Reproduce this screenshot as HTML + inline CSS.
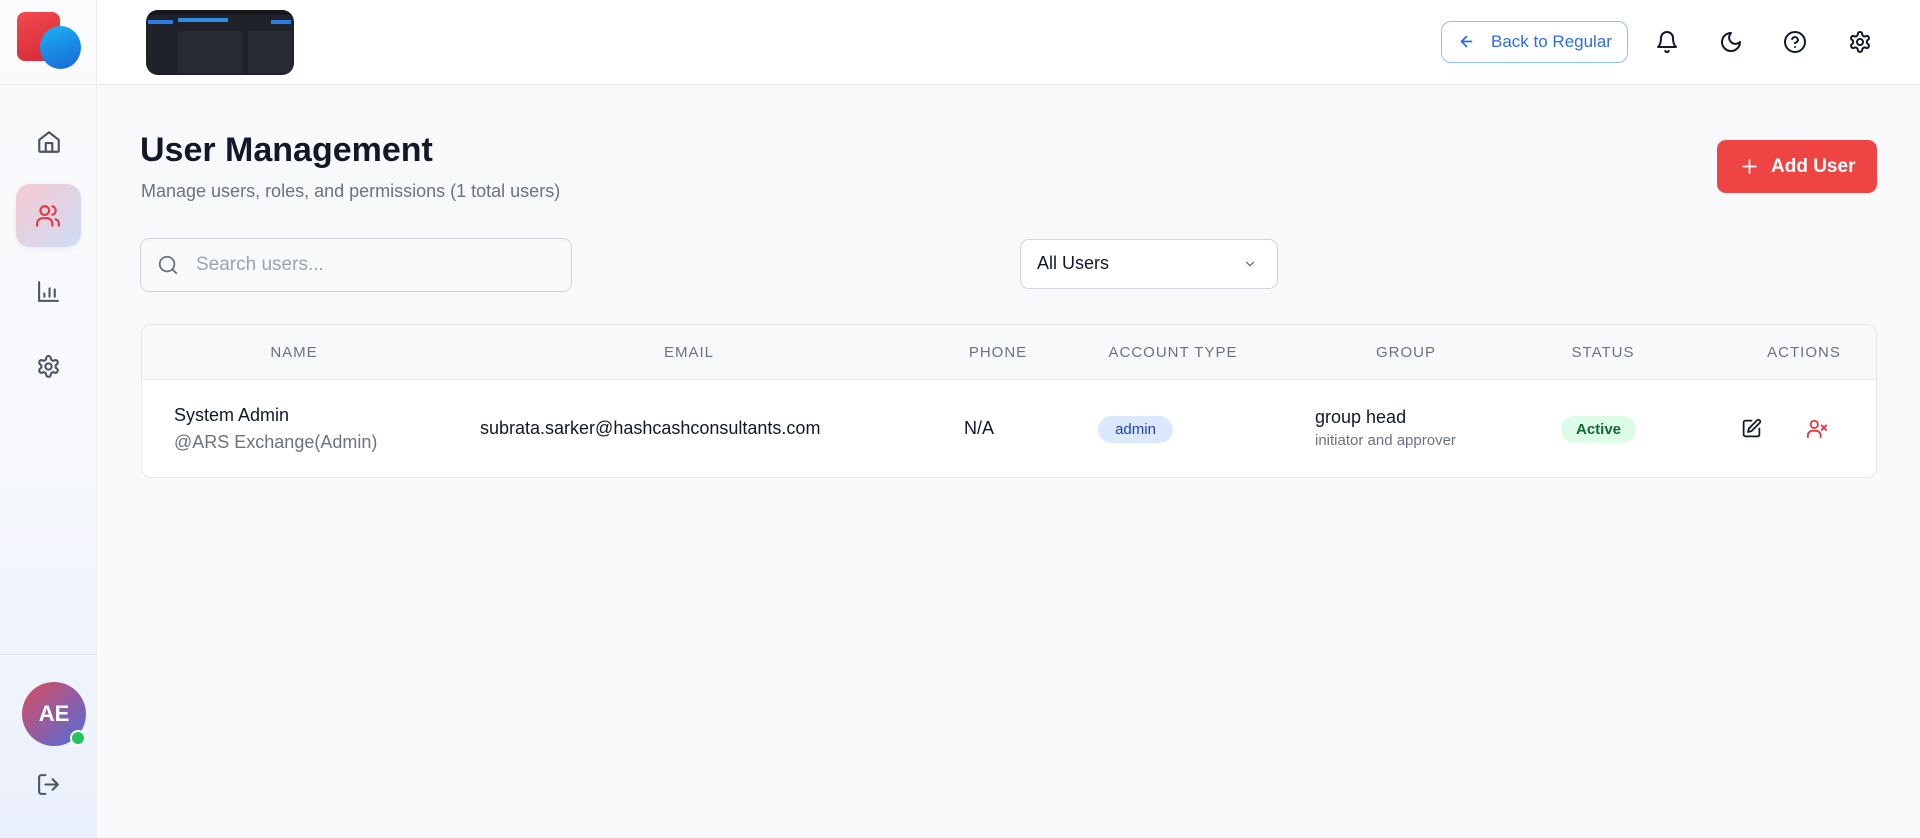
<!DOCTYPE html>
<html><head><meta charset="utf-8"><style>
*{box-sizing:border-box;margin:0;padding:0}
body{width:1920px;height:838px;overflow:hidden;font-family:"Liberation Sans",sans-serif;background:#f8f9fb;position:relative;color:#111827}
.abs{position:absolute}
.side{left:0;top:0;width:97px;height:838px;background:linear-gradient(180deg,#fbfbfd 0%,#f6f8fc 55%,#eaf0fc 100%);border-right:1px solid #eceef2}
.head{left:97px;top:0;right:0;height:85px;background:#fff;border-bottom:1px solid #e5e7eb}
svg{display:block}
.th{position:absolute;top:344px;font-size:15px;letter-spacing:1px;color:#6b7280;transform:translateX(-50%)}
</style></head><body>
<div class="abs side">
  <div class="abs" style="left:0;top:0;width:97px;height:85px;border-bottom:1px solid #eceef2"></div>
  <div class="abs" style="left:17px;top:12px;width:43px;height:49px;border-radius:8px;background:linear-gradient(160deg,#f2494f,#d42a36)"></div>
  <div class="abs" style="left:40px;top:26px;width:41px;height:43px;border-radius:50%;background:linear-gradient(160deg,#1eb0f3,#1668d4)"></div>
  <svg class="abs" style="left:36px;top:129px" width="26" height="26" viewBox="0 0 24 24" fill="none" stroke="#4b5563" stroke-width="2" stroke-linecap="round" stroke-linejoin="round"><path d="M3 10l9-7 9 7v10a1 1 0 0 1-1 1H4a1 1 0 0 1-1-1z"/><path d="M9 21v-8h6v8"/></svg>
  <div class="abs" style="left:16px;top:184px;width:65px;height:63px;border-radius:14px;background:linear-gradient(135deg,#f6c9cf,#cddcf8);box-shadow:0 2px 6px rgba(0,0,0,.06)"></div>
  <svg class="abs" style="left:35px;top:203px" width="26" height="26" viewBox="0 0 24 24" fill="none" stroke="#e53941" stroke-width="2" stroke-linecap="round"><circle cx="9" cy="7" r="4"/><path d="M2 21v-2a5 5 0 0 1 5-5h4a5 5 0 0 1 5 5v2"/><path d="M16 3.1a4 4 0 0 1 0 7.8M22 21v-2a4 4 0 0 0-3-3.9"/></svg>
  <svg class="abs" style="left:36px;top:279px" width="25" height="25" viewBox="0 0 24 24" fill="none" stroke="#4b5563" stroke-width="2" stroke-linecap="round"><path d="M3 3v18h18M8 17v-3M13 17V9M18 17v-7"/></svg>
  <svg class="abs" style="left:36px;top:354px" width="25" height="25" viewBox="0 0 24 24" fill="none" stroke="#4b5563" stroke-width="2"><path d="M12.2 2h-.4a2 2 0 0 0-2 2v.2a2 2 0 0 1-1 1.7l-.4.3a2 2 0 0 1-2 0l-.2-.1a2 2 0 0 0-2.7.7l-.2.4a2 2 0 0 0 .7 2.7l.2.1a2 2 0 0 1 1 1.7v.5a2 2 0 0 1-1 1.7l-.2.1a2 2 0 0 0-.7 2.7l.2.4a2 2 0 0 0 2.7.7l.2-.1a2 2 0 0 1 2 0l.4.3a2 2 0 0 1 1 1.7v.2a2 2 0 0 0 2 2h.4a2 2 0 0 0 2-2v-.2a2 2 0 0 1 1-1.7l.4-.3a2 2 0 0 1 2 0l.2.1a2 2 0 0 0 2.7-.7l.2-.4a2 2 0 0 0-.7-2.7l-.2-.1a2 2 0 0 1-1-1.7v-.5a2 2 0 0 1 1-1.7l.2-.1a2 2 0 0 0 .7-2.7l-.2-.4a2 2 0 0 0-2.7-.7l-.2.1a2 2 0 0 1-2 0l-.4-.3a2 2 0 0 1-1-1.7V4a2 2 0 0 0-2-2z"/><circle cx="12" cy="12" r="3"/></svg>
  <div class="abs" style="left:0;top:654px;width:97px;border-top:1px solid #e3e6ee"></div>
  <div class="abs" style="left:22px;top:682px;width:64px;height:64px;border-radius:50%;background:linear-gradient(135deg,#dc4b5c,#4d6ee0);color:#fff;font-weight:bold;font-size:22px;line-height:64px;text-align:center">AE</div>
  <div class="abs" style="left:70px;top:730px;width:16px;height:16px;border-radius:50%;background:#22c55e;border:2.5px solid #fff"></div>
  <svg class="abs" style="left:36px;top:772px" width="25" height="25" viewBox="0 0 24 24" fill="none" stroke="#4b5563" stroke-width="2" stroke-linecap="round" stroke-linejoin="round"><path d="M9 21H5a2 2 0 0 1-2-2V5a2 2 0 0 1 2-2h4M16 17l5-5-5-5M21 12H9"/></svg>
</div>
<div class="abs head">
  <div class="abs" style="left:49px;top:10px;width:148px;height:65px;border-radius:12px;background:#1f2229;overflow:hidden">
    <div class="abs" style="left:0;top:0;width:148px;height:5px;background:#15171c"></div>
    <div class="abs" style="left:2px;top:10px;width:25px;height:4px;background:#2a7de1"></div>
    <div class="abs" style="left:32px;top:8px;width:50px;height:4px;background:#2f8de6"></div>
    <div class="abs" style="left:125px;top:10px;width:20px;height:4px;background:#2a7de1"></div>
    <div class="abs" style="left:32px;top:21px;width:65px;height:42px;background:#262a32"></div>
    <div class="abs" style="left:102px;top:21px;width:44px;height:42px;background:#262a32"></div>
  </div>
  <div class="abs" style="left:1344px;top:21px;width:187px;height:42px;border:1px solid #93bdf8;border-radius:10px;color:#2f6be6;font-size:17px;line-height:40px;padding-left:49px">Back to Regular</div>
  <svg class="abs" style="left:1361px;top:33px" width="17" height="17" viewBox="0 0 24 24" fill="none" stroke="#2f6be6" stroke-width="2.5" stroke-linecap="round" stroke-linejoin="round"><path d="M19 12H5M12 19l-7-7 7-7"/></svg>
  <svg class="abs" style="left:1558px;top:30px" width="24" height="24" viewBox="0 0 24 24" fill="none" stroke="#111827" stroke-width="2" stroke-linecap="round" stroke-linejoin="round"><path d="M6 8a6 6 0 0 1 12 0c0 7 3 9 3 9H3s3-2 3-9M10.3 21a1.9 1.9 0 0 0 3.4 0"/></svg>
  <svg class="abs" style="left:1622px;top:30px" width="24" height="24" viewBox="0 0 24 24" fill="none" stroke="#111827" stroke-width="2" stroke-linecap="round" stroke-linejoin="round"><path d="M12 3a6 6 0 0 0 9 9 9 9 0 1 1-9-9z"/></svg>
  <svg class="abs" style="left:1686px;top:30px" width="24" height="24" viewBox="0 0 24 24" fill="none" stroke="#111827" stroke-width="2" stroke-linecap="round" stroke-linejoin="round"><circle cx="12" cy="12" r="10"/><path d="M9.1 9a3 3 0 0 1 5.8 1c0 2-3 3-3 3M12 17h.01"/></svg>
  <svg class="abs" style="left:1751px;top:30px" width="24" height="24" viewBox="0 0 24 24" fill="none" stroke="#111827" stroke-width="2"><path d="M12.2 2h-.4a2 2 0 0 0-2 2v.2a2 2 0 0 1-1 1.7l-.4.3a2 2 0 0 1-2 0l-.2-.1a2 2 0 0 0-2.7.7l-.2.4a2 2 0 0 0 .7 2.7l.2.1a2 2 0 0 1 1 1.7v.5a2 2 0 0 1-1 1.7l-.2.1a2 2 0 0 0-.7 2.7l.2.4a2 2 0 0 0 2.7.7l.2-.1a2 2 0 0 1 2 0l.4.3a2 2 0 0 1 1 1.7v.2a2 2 0 0 0 2 2h.4a2 2 0 0 0 2-2v-.2a2 2 0 0 1 1-1.7l.4-.3a2 2 0 0 1 2 0l.2.1a2 2 0 0 0 2.7-.7l.2-.4a2 2 0 0 0-.7-2.7l-.2-.1a2 2 0 0 1-1-1.7v-.5a2 2 0 0 1 1-1.7l.2-.1a2 2 0 0 0 .7-2.7l-.2-.4a2 2 0 0 0-2.7-.7l-.2.1a2 2 0 0 1-2 0l-.4-.3a2 2 0 0 1-1-1.7V4a2 2 0 0 0-2-2z"/><circle cx="12" cy="12" r="3"/></svg>
</div>

<div class="abs" style="left:140px;top:131px;font-size:34px;font-weight:bold;color:#111827">User Management</div>
<div class="abs" style="left:141px;top:181px;font-size:18px;color:#6b7280">Manage users, roles, and permissions (1 total users)</div>
<div class="abs" style="left:1717px;top:140px;width:160px;height:53px;border-radius:9px;background:#ef4444;color:#fff;font-size:19px;font-weight:bold;line-height:53px;padding-left:54px">Add User</div>
<svg class="abs" style="left:1740px;top:157px" width="19" height="19" viewBox="0 0 24 24" fill="none" stroke="#fff" stroke-width="2.2" stroke-linecap="round"><path d="M12 4v16M4 12h16"/></svg>

<div class="abs" style="left:140px;top:238px;width:432px;height:54px;border:1px solid #d1d5db;border-radius:9px;background:#f9fafb"></div>
<svg class="abs" style="left:157px;top:254px" width="22" height="22" viewBox="0 0 24 24" fill="none" stroke="#6b7280" stroke-width="2" stroke-linecap="round"><circle cx="11" cy="11" r="8"/><path d="M21 21l-4.3-4.3"/></svg>
<div class="abs" style="left:196px;top:254px;font-size:19px;color:#9ca3af">Search users...</div>

<div class="abs" style="left:1020px;top:239px;width:258px;height:50px;border:1px solid #d1d5db;border-radius:9px;background:#fff"></div>
<div class="abs" style="left:1037px;top:253px;font-size:18px;color:#111827">All Users</div>
<svg class="abs" style="left:1243px;top:257px" width="14" height="14" viewBox="0 0 24 24" fill="none" stroke="#6b7280" stroke-width="2.2" stroke-linecap="round" stroke-linejoin="round"><path d="M6 9l6 6 6-6"/></svg>

<div class="abs" style="left:141px;top:324px;width:1736px;height:154px;border:1px solid #e5e7eb;border-radius:10px;background:#fff;overflow:hidden">
  <div style="height:55px;background:#f8f9fb;border-bottom:1px solid #e5e7eb"></div>
</div>
<div class="th" style="left:294px">NAME</div>
<div class="th" style="left:689px">EMAIL</div>
<div class="th" style="left:998px">PHONE</div>
<div class="th" style="left:1173px">ACCOUNT TYPE</div>
<div class="th" style="left:1406px">GROUP</div>
<div class="th" style="left:1603px">STATUS</div>
<div class="th" style="left:1804px">ACTIONS</div>

<div class="abs" style="left:174px;top:405px;font-size:18px;color:#111827">System Admin</div>
<div class="abs" style="left:174px;top:432px;font-size:18px;color:#6b7280">@ARS Exchange(Admin)</div>
<div class="abs" style="left:480px;top:418px;font-size:18px;color:#111827">subrata.sarker@hashcashconsultants.com</div>
<div class="abs" style="left:964px;top:418px;font-size:18px;color:#111827">N/A</div>
<div class="abs" style="left:1098px;top:416px;width:75px;height:27px;border-radius:14px;background:#dbe8fe;color:#1e40af;font-size:15px;line-height:27px;text-align:center">admin</div>
<div class="abs" style="left:1315px;top:407px;font-size:18px;color:#111827">group head</div>
<div class="abs" style="left:1315px;top:432px;font-size:15px;color:#6b7280">initiator and approver</div>
<div class="abs" style="left:1561px;top:416px;width:75px;height:27px;border-radius:14px;background:#dcfce7;color:#166534;font-size:15px;font-weight:bold;line-height:27px;text-align:center">Active</div>
<svg class="abs" style="left:1741px;top:418px" width="21" height="21" viewBox="0 0 24 24" fill="none" stroke="#111827" stroke-width="2" stroke-linecap="round" stroke-linejoin="round"><path d="M12 3H5a2 2 0 0 0-2 2v14a2 2 0 0 0 2 2h14a2 2 0 0 0 2-2v-7"/><path d="M18.4 2.6a2.1 2.1 0 0 1 3 3L12 15l-4 1 1-4z"/></svg>
<svg class="abs" style="left:1806px;top:418px" width="22" height="22" viewBox="0 0 24 24" fill="none" stroke="#e53941" stroke-width="2" stroke-linecap="round"><circle cx="9" cy="7" r="4"/><path d="M2 21v-2a5 5 0 0 1 5-5h4a5 5 0 0 1 5 5v2M17 8l5 5M22 8l-5 5"/></svg>
</body></html>
